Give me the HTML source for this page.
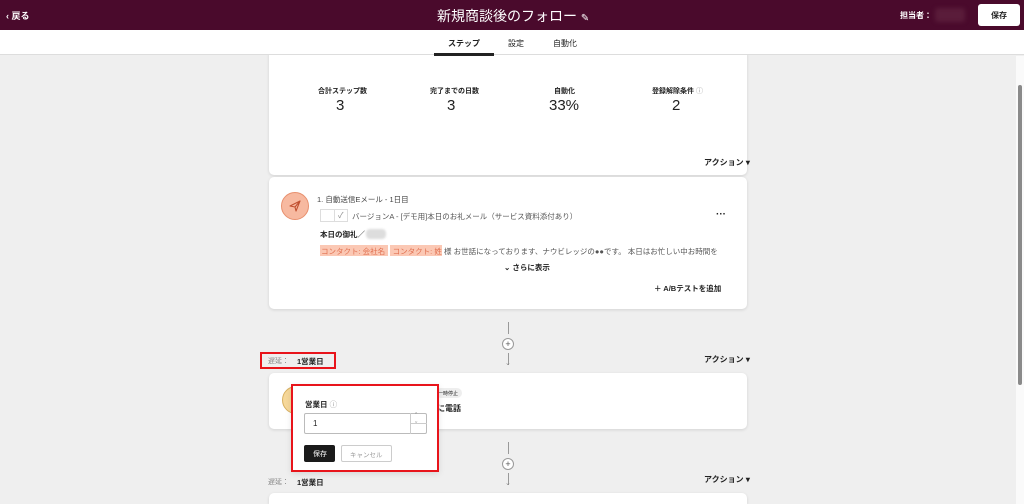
<!DOCTYPE html>
<html style="width:1024px;height:504px;overflow:hidden"><head><meta charset="utf-8"><style>
*{box-sizing:border-box;margin:0;padding:0}
body{width:1024px;height:504px;overflow:hidden;background:#efefef;font-family:"Liberation Sans","Noto Sans CJK JP",sans-serif;color:#222;position:relative}
.abs{position:absolute}
.hdr{left:0;top:0;width:1024px;height:30px;background:#4a0a2c}
.tabs{left:0;top:30px;width:1024px;height:25px;background:#fff;border-bottom:1px solid #ddd}
.card{background:#fff;border-radius:5px;box-shadow:0 1px 3px rgba(0,0,0,.12)}
.t{position:absolute;white-space:nowrap}
</style></head><body>
<div class="abs hdr"></div>
<div class="t" style="left:6px;top:9px;color:#fff;font-size:9px;font-weight:bold">‹ 戻る</div>
<div class="t" style="left:437px;top:6px;color:#fff;font-size:14px">新規商談後のフォロー <span style="font-size:10px">✎</span></div>
<div class="t" style="left:900px;top:10px;color:#fff;font-size:8px;font-weight:bold">担当者：</div>
<div class="abs" style="left:935px;top:8px;width:30px;height:14px;background:#5a1c3a;border-radius:3px;filter:blur(2px)"></div>
<div class="abs" style="left:978px;top:4px;width:42px;height:22px;background:#fff;border-radius:3px"></div>
<div class="t" style="left:991px;top:10px;font-size:8px;font-weight:bold">保存</div>

<div class="abs card" style="left:269px;top:50px;width:478px;height:125px"></div>
<div class="abs tabs"></div>
<div class="t" style="left:448px;top:38px;font-size:8px;font-weight:bold">ステップ</div>
<div class="abs" style="left:434px;top:53px;width:60px;height:3px;background:#222"></div>
<div class="t" style="left:508px;top:38px;font-size:8px">設定</div>
<div class="t" style="left:553px;top:38px;font-size:8px">自動化</div>
<div class="abs" style="left:1016px;top:56px;width:8px;height:448px;background:#fafafa"></div>
<div class="abs" style="left:1018px;top:85px;width:4px;height:300px;background:#8a8a8a;border-radius:2px"></div>

<div class="t" style="left:318px;top:86px;font-size:7px;font-weight:bold">合計ステップ数</div>
<div class="t" style="left:336px;top:97px;font-size:15px">3</div>
<div class="t" style="left:430px;top:86px;font-size:7px;font-weight:bold">完了までの日数</div>
<div class="t" style="left:447px;top:97px;font-size:15px">3</div>
<div class="t" style="left:554px;top:86px;font-size:7px;font-weight:bold">自動化</div>
<div class="t" style="left:549px;top:97px;font-size:15px">33%</div>
<div class="t" style="left:652px;top:86px;font-size:7px;font-weight:bold">登録解除条件 <span style="color:#999;font-weight:normal">ⓘ</span></div>
<div class="t" style="left:672px;top:97px;font-size:15px">2</div>
<div class="t" style="left:704px;top:157px;font-size:8px;font-weight:bold">アクション ▾</div>

<div class="abs card" style="left:269px;top:177px;width:478px;height:132px"></div>
<div class="abs" style="left:281px;top:192px;width:28px;height:28px;border-radius:50%;background:#f7b9a0;border:1px solid #e8906e"></div>
<svg class="abs" style="left:289px;top:200px" width="12" height="12" viewBox="0 0 12 12"><path d="M1 6 L11 1 L7 11 L6 7 Z M6 7 L11 1" fill="none" stroke="#c05030" stroke-width="1.1" stroke-linejoin="round"/></svg>
<div class="t" style="left:317px;top:194px;font-size:7.5px;color:#444">1. 自動送信Eメール - 1日目</div>
<div class="abs" style="left:320px;top:209px;width:28px;height:13px;border:1px solid #ddd;background:#fff"></div>
<div class="abs" style="left:334px;top:209px;width:1px;height:13px;background:#ddd"></div>
<div class="t" style="left:338px;top:210px;font-size:8px;color:#888">✓</div>
<div class="t" style="left:352px;top:211px;font-size:7.5px;color:#555">バージョンA - [デモ用]本日のお礼メール（サービス資料添付あり）</div>
<div class="t" style="left:716px;top:209px;font-size:10px;font-weight:bold">···</div>
<div class="t" style="left:320px;top:229px;font-size:7.5px;font-weight:bold">本日の御礼／</div>
<div class="abs" style="left:366px;top:229px;width:20px;height:10px;background:#ddd;border-radius:4px;filter:blur(1px)"></div>
<div class="abs" style="left:320px;top:245px;width:68px;height:11px;background:#fbc8b4"></div>
<div class="abs" style="left:390px;top:245px;width:52px;height:11px;background:#fbc8b4"></div>
<div class="t" style="left:321px;top:246px;font-size:7.5px;color:#e07050">コンタクト: 会社名　コンタクト: 姓</div>
<div class="t" style="left:444px;top:246px;font-size:7.5px;color:#555">様 お世話になっております、ナウビレッジの●●です。 本日はお忙しい中お時間を</div>
<div class="t" style="left:504px;top:262px;font-size:7.5px;font-weight:bold">⌄ さらに表示</div>
<div class="t" style="left:654px;top:283px;font-size:7.5px;font-weight:bold">＋ A/Bテストを追加</div>

<div class="abs" style="left:508px;top:322px;width:1px;height:12px;background:#999"></div>
<div class="abs" style="left:502px;top:338px;width:12px;height:12px;border:1px solid #999;border-radius:50%;background:#fff;font-size:9px;line-height:10px;text-align:center;color:#555">+</div>
<div class="abs" style="left:508px;top:353px;width:1px;height:12px;background:#999"></div>
<div class="t" style="left:505px;top:359px;font-size:7px;color:#888">⌄</div>
<div class="abs" style="left:260px;top:352px;width:76px;height:17px;border:2px solid #e8141b"></div>
<div class="t" style="left:268px;top:356px;font-size:7px;color:#888">遅延：</div>
<div class="t" style="left:297px;top:356px;font-size:7.5px;font-weight:bold">1営業日</div>
<div class="t" style="left:704px;top:354px;font-size:8px;font-weight:bold">アクション ▾</div>

<div class="abs card" style="left:269px;top:373px;width:478px;height:56px"></div>
<div class="abs" style="left:282px;top:386px;width:28px;height:28px;border-radius:50%;background:#f6d89a;border:1px solid #d8b060"></div>
<div class="abs" style="left:436px;top:388px;width:26px;height:10px;background:#eee;border-radius:5px"></div>
<div class="t" style="left:438px;top:390px;font-size:5px">一時停止</div>
<div class="t" style="left:437px;top:403px;font-size:8px;font-weight:bold">に電話</div>

<div class="abs" style="left:508px;top:442px;width:1px;height:12px;background:#999"></div>
<div class="abs" style="left:502px;top:458px;width:12px;height:12px;border:1px solid #999;border-radius:50%;background:#fff;font-size:9px;line-height:10px;text-align:center;color:#555">+</div>
<div class="abs" style="left:508px;top:473px;width:1px;height:12px;background:#999"></div>
<div class="t" style="left:505px;top:479px;font-size:7px;color:#888">⌄</div>
<div class="t" style="left:268px;top:477px;font-size:7px;color:#888">遅延：</div>
<div class="t" style="left:297px;top:477px;font-size:7.5px;font-weight:bold">1営業日</div>
<div class="t" style="left:704px;top:474px;font-size:8px;font-weight:bold">アクション ▾</div>
<div class="abs card" style="left:269px;top:493px;width:478px;height:11px;border-radius:5px 5px 0 0"></div>

<div class="abs" style="left:291px;top:384px;width:148px;height:88px;background:#fff;border:2px solid #e8141b;box-shadow:0 2px 6px rgba(0,0,0,.1)"></div>
<div class="t" style="left:305px;top:399px;font-size:7.5px;font-weight:bold">営業日 <span style="color:#999;font-weight:normal">ⓘ</span></div>
<div class="abs" style="left:304px;top:413px;width:123px;height:21px;border:1px solid #bbb;border-radius:2px;background:#fff"></div>
<div class="abs" style="left:410px;top:413px;width:1px;height:21px;background:#ccc"></div>
<div class="abs" style="left:410px;top:423px;width:17px;height:1px;background:#ccc"></div>
<div class="t" style="left:415px;top:413px;font-size:7px;color:#777">ˆ</div>
<div class="t" style="left:415px;top:422px;font-size:7px;color:#777">ˇ</div>
<div class="t" style="left:313px;top:419px;font-size:8px">1</div>
<div class="abs" style="left:304px;top:445px;width:31px;height:17px;background:#1a1a1a;border-radius:2px"></div>
<div class="t" style="left:313px;top:449px;font-size:7px;color:#fff">保存</div>
<div class="abs" style="left:341px;top:445px;width:51px;height:17px;border:1px solid #ccc;border-radius:2px;background:#fff"></div>
<div class="t" style="left:350px;top:449px;font-size:6.5px;color:#999">キャンセル</div>
</body></html>
